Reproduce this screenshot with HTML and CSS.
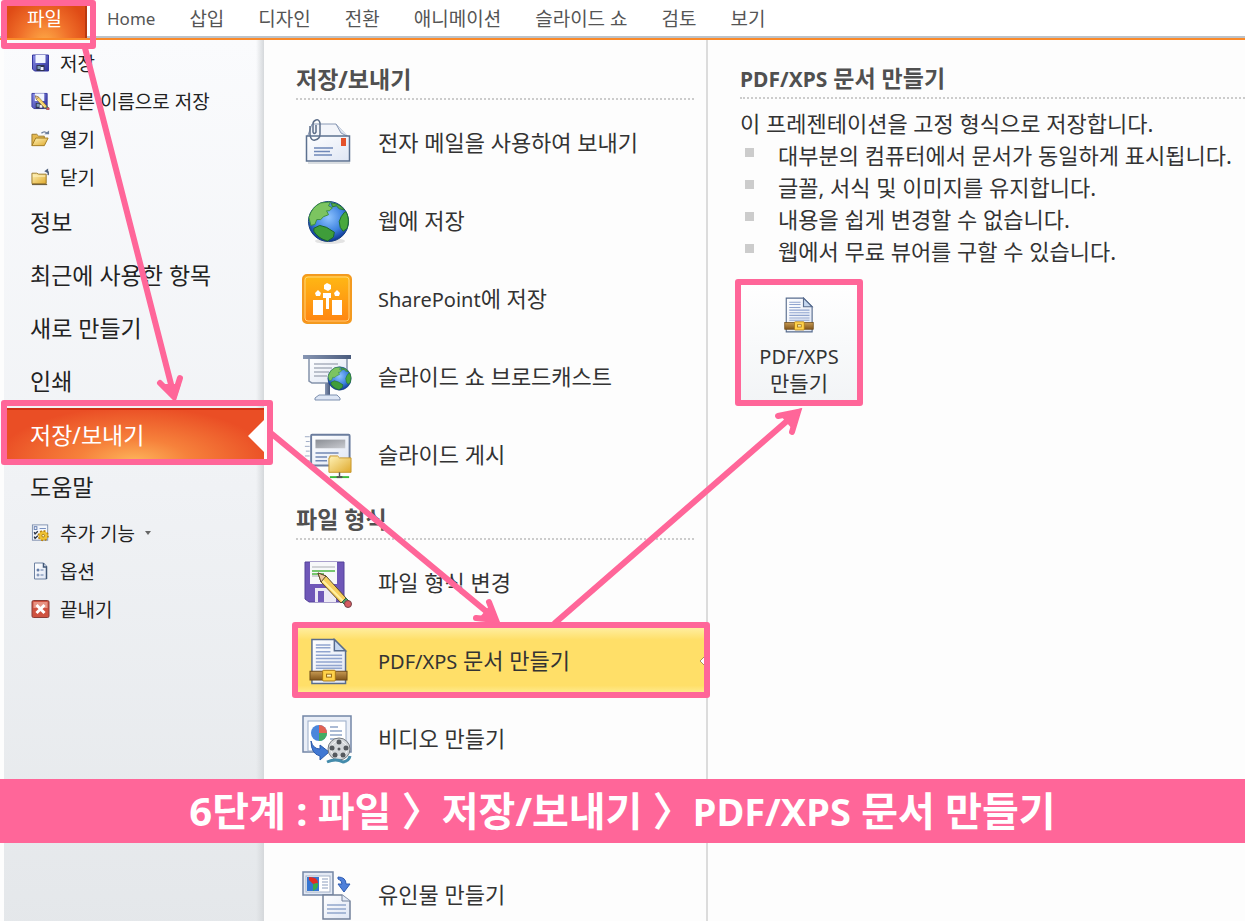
FILE: index.html
```html
<!DOCTYPE html>
<html lang="ko">
<head>
<meta charset="utf-8">
<meta name="viewport" content="width=device-width, initial-scale=1">
<title>저장/보내기</title>
<link rel="stylesheet" href="styles.css">
</head>
<body>
<svg class="defs" aria-hidden="true">
  <defs>
    <linearGradient id="paper" x1="0" y1="0" x2="1" y2="1"><stop offset="0" stop-color="#fff"/><stop offset="1" stop-color="#dfe6f4"/></linearGradient>
    <linearGradient id="folder" x1="0" y1="0" x2="1" y2="1"><stop offset="0" stop-color="#fff3b8"/><stop offset="1" stop-color="#dfa92c"/></linearGradient>
    <linearGradient id="orange" x1="0" y1="0" x2="0" y2="1"><stop offset="0" stop-color="#ffb914"/><stop offset="1" stop-color="#ff8412"/></linearGradient>
    <linearGradient id="steel" x1="0" y1="0" x2="1" y2="0"><stop offset="0" stop-color="#8796b3"/><stop offset="1" stop-color="#4a5b7c"/></linearGradient>
    <linearGradient id="disk" x1="0" y1="0" x2="1" y2="1"><stop offset="0" stop-color="#8b8fe8"/><stop offset="1" stop-color="#2c2f98"/></linearGradient>
    <linearGradient id="gray" x1="0" y1="0" x2="1" y2="1"><stop offset="0" stop-color="#8b8e95"/><stop offset="1" stop-color="#c9cbd0"/></linearGradient>
    <linearGradient id="belt" x1="0" y1="0" x2="0" y2="1"><stop offset="0" stop-color="#c79a52"/><stop offset="1" stop-color="#84571c"/></linearGradient>
    <radialGradient id="sea" cx=".5" cy=".4" r=".6"><stop offset="0" stop-color="#8fc4ff"/><stop offset=".6" stop-color="#3f83e0"/><stop offset="1" stop-color="#0d3594"/></radialGradient>
    <symbol id="i-globe" viewBox="0 0 44 44">
      <circle cx="22" cy="22" r="20.500" fill="url(#sea)" stroke="#16407e"/>
      <path d="M2 18Q5 7 14 3L24 2 22 6 26 8 23 11 20 11 22 15 17 17 14 20 10 20 8 25 4 26Z" fill="#7cc460" stroke="#3d8f3c"/>
      <path d="M25 3Q34 4 38 10L33 9 30 6 26 7Z" fill="#57a945" stroke="#2a7c35"/>
      <path d="M7 29 13 26 20 28 28 33 27 38 21 42Q11 39 7 32Z" fill="#3f9d3a" stroke="#1c652b"/>
      <path d="M38 13 40 12Q44 20 41 29L37 32 34 28 33 22 35 17Z" fill="#48a83e" stroke="#1f702c"/>
    </symbol>
    <symbol id="i-pdf" viewBox="0 0 40 48">
      <path d="M3 1.500H26L37.500 13V46.500H3Z" fill="url(#paper)" stroke="#586c8e" stroke-width="1.500"/>
      <path d="M26 1.500V13H37.500Z" fill="#c6d8f0" stroke="#586c8e" stroke-width="1.500"/>
      <path d="M7 7H22M7 10H22M7 14H22M7 17.500H34M7 21H34M7 24.500H34M7 28H34M7 31H34" stroke="#91a5cf" stroke-width="1.500"/>
      <rect x="1" y="34" width="38" height="9" fill="url(#belt)" stroke="#6d4a18"/>
      <rect x="14" y="33" width="13" height="11" rx="1" fill="#ffd24a" stroke="#a87510"/>
      <rect x="18" y="37" width="5" height="3" fill="#fff6bd" stroke="#9a6a14"/>
    </symbol>
    <symbol id="i-pencil" viewBox="0 0 36 36">
      <path d="M1 1 9 4 29 26 24 31 4 10Z" fill="#f6ce5d" stroke="#5d4a2c"/>
      <path d="M3 6 26 29" stroke="#fff0a2" stroke-width="2"/>
      <path d="M1 1 9 4 4 10Z" fill="#f0c9a0" stroke="#5d4a2c"/>
      <path d="M25 30 29 26 32 29 28 33Z" fill="#4f9f66" stroke="#37654b"/>
      <circle cx="31" cy="32" r="3.500" fill="#d65a60" stroke="#74434b"/>
    </symbol>
    <symbol id="i-save" viewBox="0 0 18 18">
      <path d="M1 1H17V17H3L1 15Z" fill="url(#disk)" stroke="#34379e"/>
      <rect x="4" y="1" width="10" height="8" fill="#f2f6ff"/>
      <path d="M5 11H13V17H5Z" fill="#30344f"/><path d="M9 13H12V16H9Z" fill="#eef"/><path d="M6 12H9V15H6Z" fill="#7e9bb5"/>
    </symbol>
  </defs>
</svg>

<header class="ribbon">
  <button class="file-tab" type="button">파일</button>
  <nav class="tabs" aria-label="리본">
    <a class="tab-latin" href="#">Home</a><a href="#">삽입</a><a href="#">디자인</a><a href="#">전환</a><a href="#">애니메이션</a><a href="#">슬라이드 쇼</a><a href="#">검토</a><a href="#">보기</a>
  </nav>
</header>

<main class="backstage">
  <nav class="side" aria-label="파일">
    <button class="cmd" type="button"><svg class="ico"><use href="#i-save"/></svg>저장</button>
    <button class="cmd" type="button"><svg class="ico" viewBox="0 0 20 18"><use href="#i-save" width="18" height="18"/><use href="#i-pencil" x="4" y="3" width="16" height="16"/></svg>다른 이름으로 저장</button>
    <button class="cmd" type="button"><svg class="ico" viewBox="0 0 20 18"><path d="M1 16V4H6L8 6H14V8" fill="#e5b950" stroke="#9b792a"/><path d="M1 16 5 8H18L14 16Z" fill="url(#folder)" stroke="#a17a20"/><path d="M11 3Q14 0 17 3" fill="none" stroke="#6d7f9c" stroke-width="1.500"/><path d="M14 4H19V0Z" fill="#6d7f9c"/></svg>열기</button>
    <button class="cmd" type="button"><svg class="ico" viewBox="0 0 20 18"><path d="M1 16V5H6L8 6H16V16Z" fill="url(#folder)" stroke="#9b792a"/><path d="M2 8H15" stroke="#fff6c9"/><path d="M1 17H17" stroke="#5d4b27"/><path d="M18 7Q19 3 16 2" fill="none" stroke="#4e5f7c" stroke-width="1.500"/><path d="M14 3 18 0V5Z" fill="#4e5f7c"/></svg>닫기</button>
    <button class="place" type="button">정보</button>
    <button class="place" type="button">최근에 사용한 항목</button>
    <button class="place" type="button">새로 만들기</button>
    <button class="place" type="button">인쇄</button>
    <button class="place current" type="button" aria-current="page">저장/보내기</button>
    <button class="place" type="button">도움말</button>
    <button class="cmd" type="button"><svg class="ico" viewBox="0 0 20 20"><rect x="1" y="1" width="17" height="17" fill="#f3f6fb" stroke="#7b8dac"/><rect x="3" y="3" width="3" height="3" fill="none" stroke="#5b76ac"/><path d="M9 5H16" stroke="#6a86bb"/><path d="M3 9 4 11 7 8M3 14 4 16 7 13" fill="none" stroke="#2c3445" stroke-width="1.500"/><circle cx="13" cy="13" r="5" fill="#e5b31d" stroke="#b88310" stroke-width="2.500" stroke-dasharray="2 1.900"/><circle cx="13" cy="13" r="4.500" fill="#efc233"/><circle cx="13" cy="13" r="1.500" fill="#fff5c4" stroke="#a27510"/></svg>추가 기능<svg class="drop" viewBox="0 0 6 4"><path d="M0 0H6L3 4Z" fill="#666"/></svg></button>
    <button class="cmd" type="button"><svg class="ico" viewBox="0 0 18 18"><path d="M3 1H12L15 4V17H3Z" fill="url(#paper)" stroke="#6f83a3"/><path d="M12 1V5H15V17" fill="none" stroke="#405777" stroke-width="1.500"/><circle cx="6.500" cy="8" r="1.500" fill="#637ca7"/><circle cx="6.500" cy="13" r="1" fill="none" stroke="#637ca7"/><path d="M9 8H12M9 13H12" stroke="#637ca7"/></svg>옵션</button>
    <button class="cmd" type="button"><svg class="ico" viewBox="0 0 18 18"><rect x=".5" y=".5" width="17" height="17" rx="1.500" fill="#cf5240" stroke="#8b3d36"/><rect x="2" y="2" width="14" height="6" fill="#e79383"/><path d="M5 5 13 13M13 5 5 13" stroke="#fff" stroke-width="3"/></svg>끝내기</button>
  </nav>

  <section class="choices">
    <h2 class="title">저장/보내기</h2>
    <button class="item" type="button"><svg class="pic" viewBox="0 0 50 50"><path d="M5 20 10 6H34L47 20" fill="#f3f5fa" stroke="#8a9ab5"/><path d="M34 6 39 15 47 19" fill="#dfe5f0" stroke="#8a9ab5"/><rect x="4.500" y="18" width="43" height="25" fill="url(#paper)" stroke="#5c7190" stroke-width="1.500"/><path d="M12 30H31M12 33.500H28M12 37H30" stroke="#6f88b8" stroke-width="1.500"/><rect x="39" y="20" width="5" height="8" fill="#e4512a"/><path d="M8 8V17Q9 23 13 22Q18 21 18 16V5Q17 1 14 2Q11 3 11 6V14Q12 17 14 14V7" fill="none" stroke="#5e6f8a" stroke-width="1.500"/><path d="M6 45H48" stroke="#d9dde1" stroke-width="2"/></svg><span class="label">전자 메일을 사용하여 보내기</span></button>
    <button class="item" type="button"><svg class="pic" viewBox="0 0 50 50"><ellipse cx="28" cy="45" rx="15" ry="3" fill="#bbb" opacity=".4"/><use href="#i-globe" x="5" y="4" width="43" height="43"/></svg><span class="label">웹에 저장</span></button>
    <button class="item" type="button"><svg class="pic" viewBox="0 0 50 50"><rect x="1" y="1" width="48" height="48" rx="4" fill="url(#orange)" stroke="#f39a20" stroke-width="2"/><rect x="3" y="3" width="44" height="44" rx="3" fill="none" stroke="#ffd37b"/><g fill="#fff"><path d="M22 11 25 9 29 11V15L26 17 22 15Z"/><path d="M21 19H29V24H27V35H24V24H21Z"/><path d="M13 19 16 16 19 19 18 22H14ZM32 19 35 16 38 19 37 22H33Z"/><rect x="11" y="26" width="10" height="15"/><rect x="30" y="26" width="10" height="15"/></g></svg><span class="label"><span class="latin">SharePoint</span>에 저장</span></button>
    <button class="item" type="button"><svg class="pic" viewBox="0 0 50 50"><path d="M7 6H45V29L42 31H10L7 29Z" fill="url(#paper)" stroke="#8492aa" stroke-width="1.500"/><rect x="1" y="3" width="48" height="4" fill="url(#steel)"/><path d="M12 12H36M12 16H30M12 20H27M12 24H25" stroke="#a9b0bd" stroke-width="1.500"/><path d="M23 31H28V44H23Z" fill="url(#steel)"/><path d="M13 48V46L17 43H35L38 46V48Z" fill="#dde6f5" stroke="#7d8fae"/><use href="#i-globe" x="25" y="14" width="25" height="25"/></svg><span class="label">슬라이드 쇼 브로드캐스트</span></button>
    <button class="item" type="button"><svg class="pic" viewBox="0 0 52 50"><rect x="9.500" y="4" width="40" height="32" rx="1" fill="url(#paper)" stroke="#6b7d9e" stroke-width="2"/><rect x="14" y="9" width="31" height="9" fill="url(#gray)"/><path d="M14 23H38M14 27H26M14 31H26" stroke="#7288b4" stroke-width="1.500"/><path d="M3 6H8M4 11H8M3 16H8M4 21H8M3 26H8M4 31H8" stroke="#9caac4"/><path d="M29 28V26H37L39 28H51V43H28V28Z" fill="url(#folder)" stroke="#c7962c"/><path d="M39 43V48" stroke="#555" stroke-width="1.500"/><path d="M29 48H49" stroke="#3dba3a" stroke-width="2"/><path d="M36 48H42" stroke="#555" stroke-width="2"/></svg><span class="label">슬라이드 게시</span></button>

    <h2 class="title">파일 형식</h2>
    <button class="item" type="button"><svg class="pic" viewBox="0 0 50 50"><path d="M3 4H42V44H7L3 41Z" fill="#6f57b8" stroke="#55439a"/><rect x="8" y="4" width="27" height="22" fill="#f7f8fa"/><path d="M10 9H33M10 18H17" stroke="#aaadb2"/><path d="M10 13H33M10 16H22" stroke="#4eb643" stroke-width="1.500"/><path d="M13 30H34V44H13Z" fill="#ece9f5"/><rect x="16" y="33" width="6" height="11" fill="#6f57b8"/><use href="#i-pencil" x="15" y="14" width="36" height="36"/></svg><span class="label">파일 형식 변경</span></button>
    <button class="item chosen" type="button"><svg class="pic" viewBox="0 0 50 50"><use href="#i-pdf" x="7" y="2" width="39" height="47"/></svg><span class="label"><span class="latin">PDF/XPS</span> 문서 만들기</span><svg class="notch" viewBox="0 0 7 12"><path d="M7 0 1 6 7 12Z" fill="#fff" stroke="#a8925a"/></svg></button>
    <button class="item" type="button"><svg class="pic" viewBox="0 0 50 50"><rect x="1" y="2" width="48" height="36" fill="#e9eef7" stroke="#7386a7" stroke-width="1.500"/><rect x="6" y="7" width="38" height="30" fill="#fff" stroke="#9aabc7"/><circle cx="17" cy="19" r="8" fill="#4b86db"/><path d="M17 19V11A8 8 0 0 1 25 19Z" fill="#e26252"/><path d="M17 19H25A8 8 0 0 1 17 27Z" fill="#43ac62"/><path d="M28 13H36M28 17H40M28 21H40M28 25H38" stroke="#90a5c8" stroke-width="1.500"/><path d="M9 27Q11 35 18 35V31L27 38 18 46V42Q9 40 9 27Z" fill="#4178d3" stroke="#2858aa"/><circle cx="37" cy="35" r="11" fill="#d4d7da" stroke="#74797f"/><circle cx="37" cy="35" r="8" fill="none" stroke="#f4f5f6"/><g fill="#55595e"><circle cx="37" cy="28" r="2.500"/><circle cx="30" cy="34" r="2.500"/><circle cx="44" cy="34" r="2.500"/><circle cx="33" cy="41" r="2.500"/><circle cx="41" cy="41" r="2.500"/><circle cx="37" cy="35" r="1.500"/></g><path d="M25 48Q34 44 41 48Q47 47 48 42" fill="none" stroke="#448bab" stroke-width="3"/></svg><span class="label">비디오 만들기</span></button>
    <button class="item after-caption" type="button"><svg class="pic" viewBox="0 0 50 50"><rect x="1" y="2" width="30" height="23" fill="#e3e9f4" stroke="#7587a5" stroke-width="1.500"/><rect x="4" y="6" width="24" height="16" fill="#fff" stroke="#a4b1c7"/><rect x="5" y="7" width="12" height="14" fill="#3575d1"/><path d="M7 7Q16 7 16 13L11 14 7 10Z" fill="#e52c21"/><path d="M11 14 16 13Q17 18 11 21Z" fill="#3aab48"/><path d="M20 9H26M20 12H26M20 15H26M20 18H26" stroke="#8b9dbd"/><path d="M21 25H40L48 31V49H21Z" fill="url(#paper)" stroke="#73819b" stroke-width="1.500"/><path d="M40 25V31H48" fill="#e4ebf7" stroke="#73819b"/><path d="M25 35H44M25 39H44M25 43H44" stroke="#91a6cb" stroke-width="1.500"/><path d="M36 7Q44 7 44 14H48L42 22 36 14H40Q40 10 36 9Z" fill="#4f80da" stroke="#2d5bb2"/></svg><span class="label">유인물 만들기</span></button>
  </section>

  <section class="detail">
    <h2 class="title"><span class="title-latin">PDF/XPS</span> 문서 만들기</h2>
    <p class="lead">이 프레젠테이션을 고정 형식으로 저장합니다.</p>
    <ul class="points">
      <li>대부분의 컴퓨터에서 문서가 동일하게 표시됩니다.</li>
      <li>글꼴, 서식 및 이미지를 유지합니다.</li>
      <li>내용을 쉽게 변경할 수 없습니다.</li>
      <li>웹에서 무료 뷰어를 구할 수 있습니다.</li>
    </ul>
    <button class="create" type="button"><svg class="doc"><use href="#i-pdf"/></svg><span><span class="latin">PDF/XPS</span><br>만들기</span></button>
  </section>
</main>

<svg class="marks" width="900" height="720" aria-hidden="true">
  <g fill="none" stroke="#ff6699" stroke-width="6" stroke-linejoin="round">
    <rect x="4" y="3" width="89" height="43"/>
    <rect x="4" y="403" width="266" height="59"/>
    <rect x="295" y="625" width="412" height="70"/>
    <rect x="738" y="282" width="122" height="121"/>
  </g>
  <g fill="none" stroke="#ff6699" stroke-width="6" stroke-linecap="round" stroke-linejoin="miter">
    <path d="M85 48 173 392M160 383 174 397 180 378"/>
    <path d="M272 434 493 617M476 618 496 620 489 602"/>
    <path d="M555 623 795 414M778 416 798 412 792 432"/>
  </g>
  <g fill="#ff6699">
    <path d="M163 384 175 402 181 384Z"/>
    <path d="M480 617 501 625 490 605Z"/>
    <path d="M780 415 802 408 793 430Z"/>
  </g>
</svg>
<p class="caption">6단계 : 파일 〉저장/보내기 〉<span class="caption-latin">PDF/XPS</span> 문서 만들기</p>
</body>
</html>
```
FILE: styles.css
```css
* {
  box-sizing: border-box;
}

body {
  margin: 0;
  position: relative;
  height: 100vh;
  overflow: hidden;
  display: flex;
  flex-direction: column;
  background: #fdfdfd;
  color: #333;
  font-family: "Noto Sans", "Noto Sans CJK KR", sans-serif;
  font-size: 22px;
}

button {
  border: 0;
  padding: 0;
  background: none;
  color: inherit;
  font: inherit;
  text-align: left;
  white-space: nowrap;
  cursor: pointer;
}

h2,
p,
ul {
  margin: 0;
  padding: 0;
}

/* Latin runs are set a little smaller than the Hangul around them. */
.latin {
  font-size: 20px;
}

.tab-latin {
  font-size: 17px;
}

.title-latin {
  font-size: 21px;
}

.caption-latin {
  font-size: 38px;
}

.defs {
  position: absolute;
  width: 0;
  height: 0;
}

.ribbon {
  flex: none;
  display: flex;
  height: 40px;
  padding-left: 4px;
  background: #fff;
  border-bottom: 2px solid #fa8a2a;
  box-shadow: inset 0 -2px #bcc3ca;
  font-size: 19px;
}

.file-tab {
  width: 83px;
  padding-bottom: 3px;
  text-align: center;
  color: #fff;
  background: radial-gradient(ellipse at 50% 120%, #ffb04a 0, #f0702a 45%, #df4b16 80%);
  border-right: 2px solid #b93a10;
}

.tabs {
  display: flex;
  align-items: center;
  gap: 34px;
  padding: 0 0 2px 20px;
  white-space: nowrap;
}

.tabs a {
  color: #555;
  text-decoration: none;
}

.backstage {
  flex: 1;
  min-height: 0;
  display: grid;
  grid-template-columns: 260px 444px 1fr;
  padding-left: 4px;
}

.side {
  display: flex;
  flex-direction: column;
  padding-top: 4px;
  color: #222;
  background: linear-gradient(to right, transparent 252px, #d5d8db 260px), linear-gradient(#fafbfd, #f0f2f5 50%, #e4e7ea);
}

.cmd {
  flex: none;
  display: flex;
  align-items: center;
  gap: 10px;
  height: 38px;
  padding: 0 0 1px 27px;
  font-size: 19px;
}

.ico {
  width: 19px;
  height: 18px;
}

.drop {
  width: 6px;
  height: 4px;
}

.place {
  flex: none;
  height: 53px;
  padding: 0 0 3px 26px;
  font-size: 23px;
}

.current {
  position: relative;
  color: #fff;
  background: radial-gradient(ellipse at 50% 100%, #fdb45a 0, #f6813b 30%, #ea4e25 75%);
  border-top: 2px solid #cf2f14;
}

.current::after {
  content: "";
  position: absolute;
  right: 0;
  top: 50%;
  border: solid transparent;
  border-width: 16px 16px 16px 0;
  border-right-color: #fff;
  transform: translateY(-50%);
}

.choices {
  display: flex;
  flex-direction: column;
  padding: 14px 0 0 32px;
  border-right: 2px solid #dcdcdc;
}

.title {
  flex: none;
  height: 46px;
  margin: 0 12px 4px 0;
  font-size: 23px;
  line-height: 50px;
  color: #505050;
  border-bottom: 2px dotted #ccc;
}

.item {
  flex: none;
  position: relative;
  display: flex;
  align-items: center;
  gap: 26px;
  height: 70px;
  margin: 4px 0;
  padding-left: 6px;
}

.label {
  padding-bottom: 4px;
}

.pic {
  width: 50px;
  height: 50px;
}

.chosen {
  background: linear-gradient(#fff0a8, #ffdf68 20%, #ffdf68 85%, #fff0a0);
}

.notch {
  position: absolute;
  right: 0;
  top: 29px;
  width: 7px;
  height: 12px;
}

.after-caption {
  margin-top: 82px;
}

.detail {
  padding: 13px 0 0 32px;
}

.detail .title {
  margin: 0 0 8px;
}

.lead {
  line-height: 32px;
}

.points {
  list-style: none;
}

.points li {
  display: flex;
  gap: 24px;
  padding-left: 5px;
  line-height: 32px;
  white-space: nowrap;
}

.points li::before {
  content: "";
  width: 9px;
  height: 9px;
  margin-top: 9px;
  background: #ccc;
}

.create {
  display: flex;
  flex-direction: column;
  align-items: center;
  gap: 10px;
  width: 118px;
  height: 121px;
  margin-top: 16px;
  padding-top: 14px;
  text-align: center;
  font-size: 21px;
  line-height: 27px;
  background: linear-gradient(#fff, #f2f4f6);
}

.doc {
  width: 30px;
  height: 36px;
}

.marks {
  position: absolute;
  left: 0;
  top: 0;
  pointer-events: none;
}

.caption {
  position: absolute;
  left: 0;
  right: 0;
  top: 779px;
  color: #fff;
  background: #f69;
  font-size: 40px;
  font-weight: 700;
  line-height: 63px;
  text-align: center;
  white-space: nowrap;
}
```
